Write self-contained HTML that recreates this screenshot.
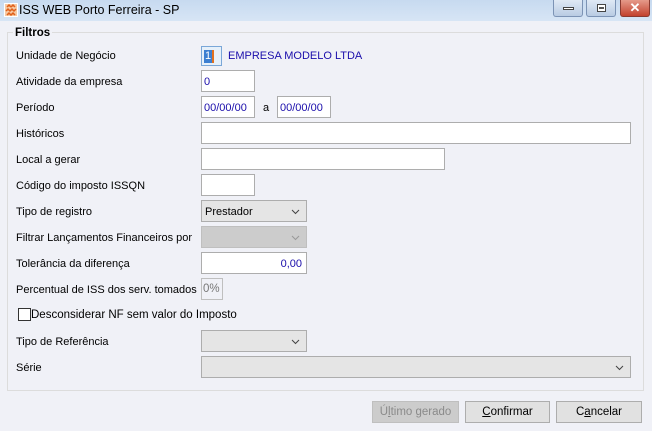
<!DOCTYPE html>
<html><head><meta charset="utf-8"><style>
*{box-sizing:border-box;margin:0;padding:0}
body{width:652px;height:431px;background:#f0f1f7;font-family:"Liberation Sans",sans-serif;font-size:11px;color:#000;position:relative;overflow:hidden}
.a{position:absolute}
.tb{left:0;top:0;width:652px;height:21px;background:linear-gradient(#c7daf0,#d7e5f5)}
.lbl{left:16px;margin-top:2px}
.in{background:#fff;border:1px solid #adadad;color:#1a0dab;padding:4px 2px 2px;font-size:11px;height:22px;line-height:14px}
.sel{background:#e5e5e5;border:1px solid #adadad;height:22px;padding:4px 3px 2px;line-height:14px}
.dis{background:#cccccc;border-color:#bfbfbf}
.chev{position:absolute;right:6px;top:6px;width:9px;height:9px}
.btn{background:#e1e1e1;border:1px solid #adadad;height:22px;text-align:center;line-height:21px;font-size:11.5px}
</style></head><body>
<div class="a tb"></div>
<div class="a" style="left:4px;top:3px;width:14px;height:14px;background:#fff"><svg width="14" height="14"><rect x="1" y="1" width="12" height="12" fill="#f7c9a3"/><path d="M3 4l2-2 2 2M7 4l2-2 2 2M2 8l2-2 2 2 2-2 2 2 2-2M3 12l2-2 2 2 2-2 2 2" stroke="#e0601a" stroke-width="1.5" fill="none"/></svg></div>
<div class="a" style="left:19px;top:3px;font-size:12.5px">ISS WEB Porto Ferreira - SP</div>
<div class="a" style="left:553px;top:0;width:30px;height:17px;border:1px solid #7c93b5;border-top:none;border-radius:0 0 3px 3px;background:linear-gradient(#dfe9f5,#b9cbe3)"><div class="a" style="left:9px;top:7px;width:11px;height:3px;background:#fff;border:1px solid #444"></div></div>
<div class="a" style="left:586px;top:0;width:30px;height:17px;border:1px solid #7c93b5;border-top:none;border-radius:0 0 3px 3px;background:linear-gradient(#dfe9f5,#b9cbe3)"><div class="a" style="left:10px;top:4px;width:9px;height:8px;border:1px solid #444;background:#fff"><div class="a" style="left:1px;top:2px;width:5px;height:2px;background:#555"></div></div></div>
<div class="a" style="left:620px;top:0;width:30px;height:17px;border:1px solid #8a3a30;border-top:none;border-radius:0 0 3px 3px;background:linear-gradient(#e59a8a,#c3422e);color:#fff;text-align:center;font-weight:bold;font-size:13px;line-height:15px">✕</div>
<div class="a" style="left:7px;top:32px;width:637px;height:359px;border:1px solid #dcdcdc"></div>
<div class="a" style="left:13px;top:27px;background:#f0f1f7;padding:0 2px;font-weight:bold;font-size:11.5px">Filtros</div>

<div class="a lbl" style="top:48px">Unidade de Negócio</div>
<div class="a" style="left:201px;top:46px;width:21px;height:20px;border:1px solid #7aa7d8;background:#e6f0fa"><span class="a" style="left:2px;top:3px;background:#3c7fd1;color:#fff;padding:0 1px;line-height:13px;border-right:2px solid #e07020">1</span></div>
<div class="a" style="left:228px;top:50px;color:#1a0dab">EMPRESA MODELO LTDA</div>

<div class="a lbl" style="top:74px">Atividade da empresa</div>
<div class="a in" style="left:201px;top:70px;width:54px">0</div>
<div class="a lbl" style="top:100px">Período</div>
<div class="a in" style="left:201px;top:96px;width:54px">00/00/00</div>
<div class="a" style="left:263px;top:102px">a</div>
<div class="a in" style="left:277px;top:96px;width:54px">00/00/00</div>
<div class="a lbl" style="top:126px">Históricos</div>
<div class="a in" style="left:201px;top:122px;width:430px"></div>
<div class="a lbl" style="top:152px">Local a gerar</div>
<div class="a in" style="left:201px;top:148px;width:244px"></div>
<div class="a lbl" style="top:178px">Código do imposto ISSQN</div>
<div class="a in" style="left:201px;top:174px;width:54px"></div>
<div class="a lbl" style="top:204px">Tipo de registro</div>
<div class="a sel" style="left:201px;top:200px;width:106px">Prestador<svg class="chev" viewBox="0 0 9 9"><path d="M1 3l3.5 3.5L8 3" stroke="#444" fill="none"/></svg></div>
<div class="a lbl" style="top:230px">Filtrar Lançamentos Financeiros por</div>
<div class="a sel dis" style="left:201px;top:226px;width:106px"><svg class="chev" viewBox="0 0 9 9"><path d="M1 3l3.5 3.5L8 3" stroke="#999" fill="none"/></svg></div>
<div class="a lbl" style="top:256px">Tolerância da diferença</div>
<div class="a in" style="left:201px;top:252px;width:106px;text-align:right;padding-right:4px">0,00</div>
<div class="a lbl" style="top:282px">Percentual de ISS dos serv. tomados</div>
<div class="a" style="left:201px;top:278px;width:22px;height:22px;border:1px solid #bfbfbf;color:#777;padding:4px 1px 2px;font-size:11.5px">0%</div>
<div class="a" style="left:18px;top:308px;width:13px;height:13px;border:1px solid #333;background:#fff"></div>
<div class="a" style="left:31px;top:309px;font-size:11.5px">Desconsiderar NF sem valor do Imposto</div>
<div class="a lbl" style="top:334px">Tipo de Referência</div>
<div class="a sel" style="left:201px;top:330px;width:106px"><svg class="chev" viewBox="0 0 9 9"><path d="M1 3l3.5 3.5L8 3" stroke="#444" fill="none"/></svg></div>
<div class="a lbl" style="top:360px">Série</div>
<div class="a sel" style="left:201px;top:356px;width:430px"><svg class="chev" viewBox="0 0 9 9"><path d="M1 3l3.5 3.5L8 3" stroke="#444" fill="none"/></svg></div>

<div class="a btn" style="left:372px;top:401px;width:87px;background:#cccccc;border-color:#bfbfbf;color:#8a8a8a">Ú<u>l</u>timo gerado</div>
<div class="a btn" style="left:465px;top:401px;width:85px"><u>C</u>onfirmar</div>
<div class="a btn" style="left:556px;top:401px;width:86px">C<u>a</u>ncelar</div>
</body></html>
